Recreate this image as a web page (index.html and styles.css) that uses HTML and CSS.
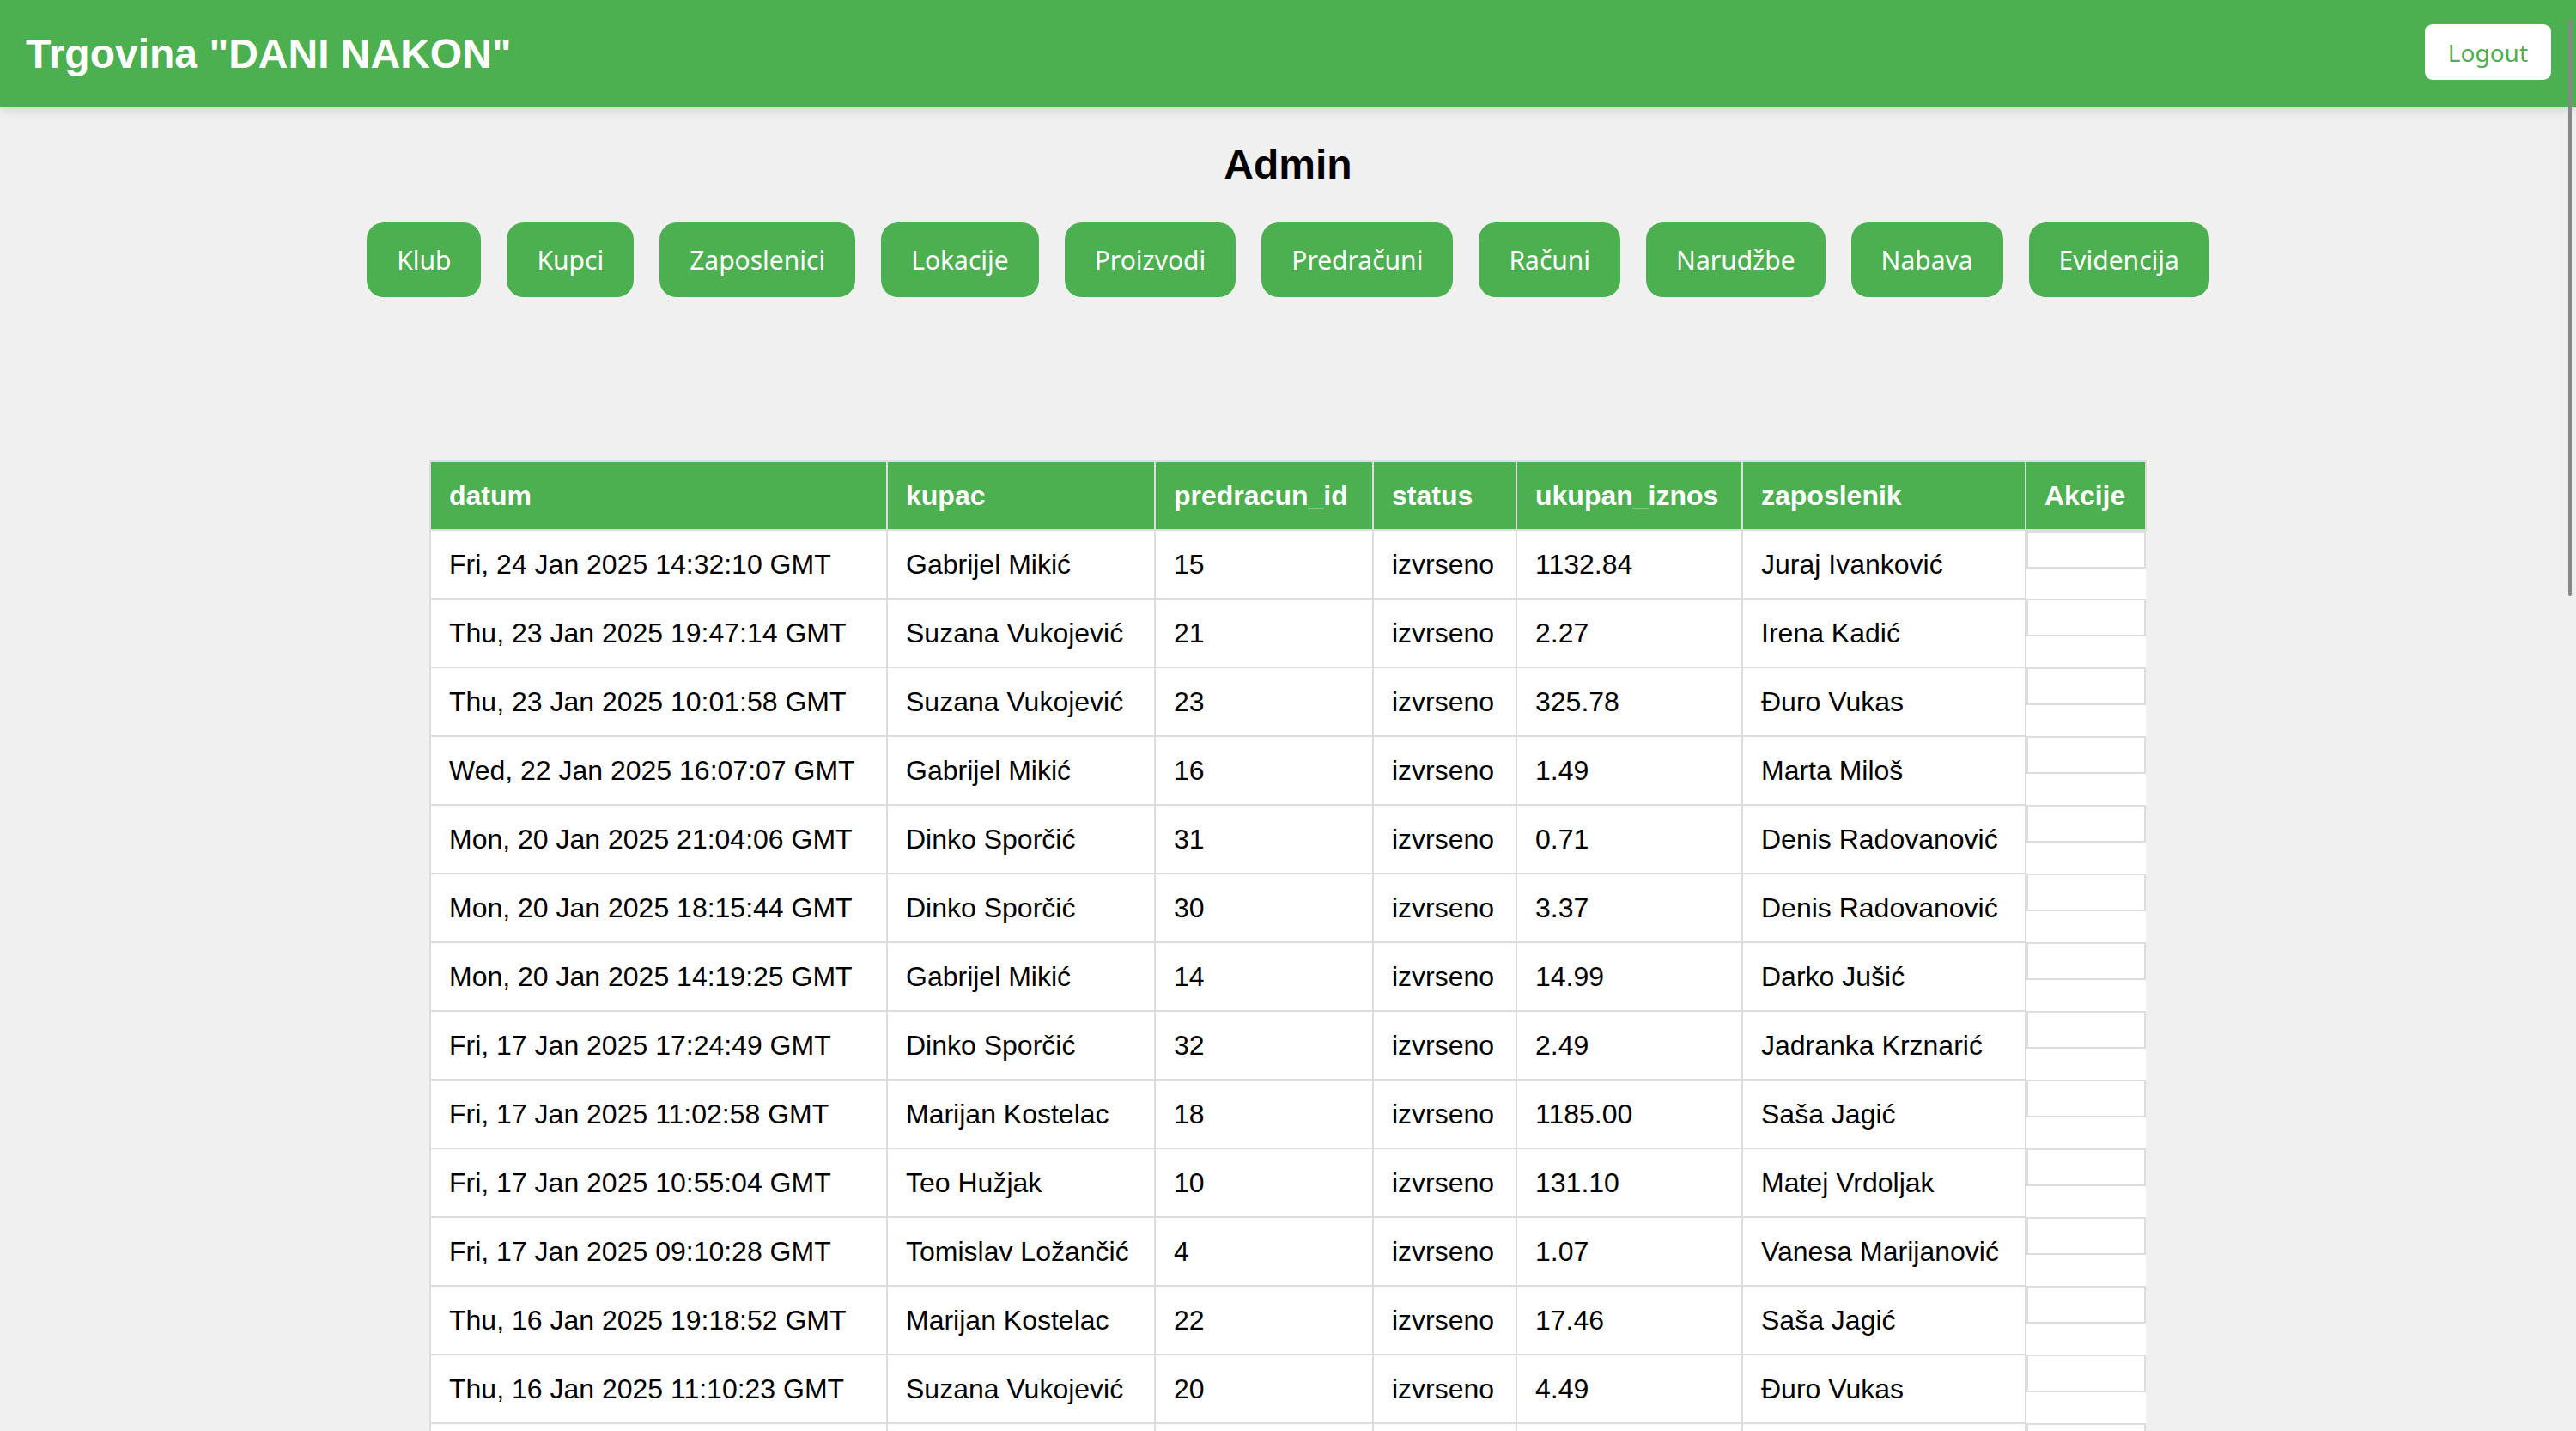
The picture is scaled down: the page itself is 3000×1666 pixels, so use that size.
FILE: index.html
```html
<!DOCTYPE html>
<html lang="hr">
<head>
<meta charset="utf-8">
<title>Trgovina "DANI NAKON" - Admin</title>
<link rel="stylesheet" href="styles.css">
</head>
<body>
<header class="topbar">
  <h1 class="brand">Trgovina "DANI NAKON"</h1>
  <button class="logout">Logout</button>
</header>
<main class="content">
  <h2 class="page-title">Admin</h2>
  <nav class="menu">
    <button class="menu-btn">Klub</button>
    <button class="menu-btn">Kupci</button>
    <button class="menu-btn">Zaposlenici</button>
    <button class="menu-btn">Lokacije</button>
    <button class="menu-btn">Proizvodi</button>
    <button class="menu-btn">Predračuni</button>
    <button class="menu-btn">Računi</button>
    <button class="menu-btn">Narudžbe</button>
    <button class="menu-btn">Nabava</button>
    <button class="menu-btn">Evidencija</button>
  </nav>
  <table class="data">
    <colgroup>
      <col class="c-datum"><col class="c-kupac"><col class="c-id"><col class="c-status"><col class="c-iznos"><col class="c-zap"><col class="c-akc">
    </colgroup>
    <thead>
      <tr><th>datum</th><th>kupac</th><th>predracun_id</th><th>status</th><th>ukupan_iznos</th><th>zaposlenik</th><th>Akcije</th></tr>
    </thead>
    <tbody>
      <tr><td>Fri, 24 Jan 2025 14:32:10 GMT</td><td>Gabrijel Mikić</td><td>15</td><td>izvrseno</td><td>1132.84</td><td>Juraj Ivanković</td><td class="actions"><div class="actions-box"></div></td></tr>
      <tr><td>Thu, 23 Jan 2025 19:47:14 GMT</td><td>Suzana Vukojević</td><td>21</td><td>izvrseno</td><td>2.27</td><td>Irena Kadić</td><td class="actions"><div class="actions-box"></div></td></tr>
      <tr><td>Thu, 23 Jan 2025 10:01:58 GMT</td><td>Suzana Vukojević</td><td>23</td><td>izvrseno</td><td>325.78</td><td>Đuro Vukas</td><td class="actions"><div class="actions-box"></div></td></tr>
      <tr><td>Wed, 22 Jan 2025 16:07:07 GMT</td><td>Gabrijel Mikić</td><td>16</td><td>izvrseno</td><td>1.49</td><td>Marta Miloš</td><td class="actions"><div class="actions-box"></div></td></tr>
      <tr><td>Mon, 20 Jan 2025 21:04:06 GMT</td><td>Dinko Sporčić</td><td>31</td><td>izvrseno</td><td>0.71</td><td>Denis Radovanović</td><td class="actions"><div class="actions-box"></div></td></tr>
      <tr><td>Mon, 20 Jan 2025 18:15:44 GMT</td><td>Dinko Sporčić</td><td>30</td><td>izvrseno</td><td>3.37</td><td>Denis Radovanović</td><td class="actions"><div class="actions-box"></div></td></tr>
      <tr><td>Mon, 20 Jan 2025 14:19:25 GMT</td><td>Gabrijel Mikić</td><td>14</td><td>izvrseno</td><td>14.99</td><td>Darko Jušić</td><td class="actions"><div class="actions-box"></div></td></tr>
      <tr><td>Fri, 17 Jan 2025 17:24:49 GMT</td><td>Dinko Sporčić</td><td>32</td><td>izvrseno</td><td>2.49</td><td>Jadranka Krznarić</td><td class="actions"><div class="actions-box"></div></td></tr>
      <tr><td>Fri, 17 Jan 2025 11:02:58 GMT</td><td>Marijan Kostelac</td><td>18</td><td>izvrseno</td><td>1185.00</td><td>Saša Jagić</td><td class="actions"><div class="actions-box"></div></td></tr>
      <tr><td>Fri, 17 Jan 2025 10:55:04 GMT</td><td>Teo Hužjak</td><td>10</td><td>izvrseno</td><td>131.10</td><td>Matej Vrdoljak</td><td class="actions"><div class="actions-box"></div></td></tr>
      <tr><td>Fri, 17 Jan 2025 09:10:28 GMT</td><td>Tomislav Ložančić</td><td>4</td><td>izvrseno</td><td>1.07</td><td>Vanesa Marijanović</td><td class="actions"><div class="actions-box"></div></td></tr>
      <tr><td>Thu, 16 Jan 2025 19:18:52 GMT</td><td>Marijan Kostelac</td><td>22</td><td>izvrseno</td><td>17.46</td><td>Saša Jagić</td><td class="actions"><div class="actions-box"></div></td></tr>
      <tr><td>Thu, 16 Jan 2025 11:10:23 GMT</td><td>Suzana Vukojević</td><td>20</td><td>izvrseno</td><td>4.49</td><td>Đuro Vukas</td><td class="actions"><div class="actions-box"></div></td></tr>
      <tr class="tail"><td></td><td></td><td></td><td></td><td></td><td></td><td class="actions"><div class="actions-box"></div></td></tr>
    </tbody>
  </table>
</main>
<div class="scroll-thumb"></div>
</body>
</html>
```

FILE: styles.css
```css
html {
  scrollbar-width: none;
}

body {
  margin: 0;
  background: #f0f0f0;
  font-family: "Liberation Sans", Arial, sans-serif;
  color: #000;
}

.topbar {
  height: 124px;
  background: #4caf50;
  display: flex;
  align-items: center;
  justify-content: space-between;
  padding: 0 29px 0 30px;
  box-shadow: 0 4px 12px rgba(0, 0, 0, 0.13);
  position: relative;
  z-index: 1;
}

.brand {
  margin: 0;
  font-size: 48px;
  font-weight: bold;
  color: #fff;
}

.logout {
  height: 65px;
  padding: 0 27px;
  margin-top: -3px;
  border: none;
  border-radius: 9px;
  background: #fff;
  color: #4caf50;
  font-family: "Noto Sans", "Open Sans", sans-serif;
  font-size: 28px;
}

.content {
  padding-top: 40px;
  display: flex;
  flex-direction: column;
  align-items: center;
}

.page-title {
  margin: 0 0 40px;
  font-size: 48px;
  font-weight: bold;
}

.menu {
  display: flex;
  justify-content: center;
  gap: 30px;
}

.menu-btn {
  height: 87px;
  padding: 0 35px;
  border: none;
  border-radius: 20px;
  background: #4caf50;
  color: #fff;
  font-family: "Noto Sans", "Open Sans", sans-serif;
  font-size: 30px;
}

.data {
  margin-top: 190px;
  width: 2000px;
  table-layout: fixed;
  border-collapse: collapse;
  font-size: 32px;
  line-height: 38px;
}

.c-datum { width: 532px; }
.c-kupac { width: 312px; }
.c-id { width: 254px; }
.c-status { width: 167px; }
.c-iznos { width: 263px; }
.c-zap { width: 330px; }
.c-akc { width: 140px; }

.data th,
.data td {
  border: 2px solid #ddd;
  padding: 20px 20px 20px 21px;
  text-align: left;
  white-space: nowrap;
}

.data th {
  background: #4caf50;
  color: #fff;
  font-weight: bold;
}

.data tbody tr {
  background: #fff;
}

.data td.actions {
  border: none;
  padding: 0;
  vertical-align: top;
}

.actions-box {
  height: 44px;
  box-sizing: border-box;
  border: 2px solid #ddd;
}

.data tr.tail td {
  height: 38px;
}

.scroll-thumb {
  position: fixed;
  top: 22px;
  right: 5px;
  width: 4px;
  height: 672px;
  border-radius: 2px;
  background: #888;
  z-index: 5;
}
```
